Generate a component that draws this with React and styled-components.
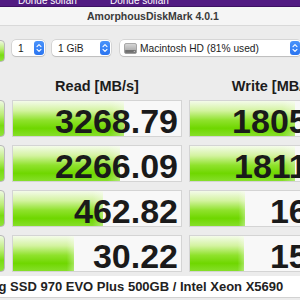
import React from 'react';
import styled, { createGlobalStyle } from 'styled-components';

const GlobalStyle = createGlobalStyle`
  body{
    margin:0;
    font-family:"Liberation Sans", Arial, sans-serif;
  }
`;

const results = [
  { read: 3268.79, write: 1805.55 },
  { read: 2266.09, write: 1811.40 },
  { read: 462.82, write: 16.43 },
  { read: 30.22, write: 15.87 },
];

// bars use a log scale like the app does
const barWidth = (v) => Math.round(24.6 * (1 + Math.log10(v)));

function Stepper() {
  return (
    <StepperBox>
      <svg width="6" height="10" viewBox="0 0 6 10">
        <path d="M1 3.6 L3 1.6 L5 3.6 M1 6.4 L3 8.4 L5 6.4" fill="none" stroke="#fff" strokeWidth="1.1" strokeLinecap="round" strokeLinejoin="round" />
      </svg>
    </StepperBox>
  );
}

function DiskIcon() {
  return (
    <svg width="13" height="13" viewBox="0 0 13 13">
      <defs>
        <linearGradient id="dk" x1="0" y1="0" x2="0" y2="1">
          <stop offset="0" stopColor="#d9d9d9" />
          <stop offset="1" stopColor="#9a9a9a" />
        </linearGradient>
      </defs>
      <rect x="0.5" y="1.5" width="12" height="10" rx="1.5" fill="url(#dk)" stroke="#7d7d7d" strokeWidth="0.6" />
      <rect x="1.2" y="8" width="10.6" height="2.8" fill="#6f6f6f" />
      <circle cx="10.3" cy="9.4" r="0.6" fill="#c8c8c8" />
    </svg>
  );
}

function App() {
  return (
    <Page>
      <GlobalStyle />
      <BackStrip>
        <span>Donde solían</span>
        <span>Donde solían</span>
      </BackStrip>
      <TitleBar>AmorphousDiskMark 4.0.1</TitleBar>
      <Body>
        <Row>
          <SideButton $tall />
          <Toolbar>
            <Select $w={33}>1<Stepper /></Select>
            <Select $w={59}>1 GiB<Stepper /></Select>
            <Select $w={181} $gapLeft={9} $icon><DiskIcon />Macintosh HD (81% used)<Stepper /></Select>
          </Toolbar>
        </Row>
        <HeaderRow>
          <span />
          <ColumnTitle>Read [MB/s]</ColumnTitle>
          <ColumnTitle>Write [MB/s]</ColumnTitle>
        </HeaderRow>
        <Rows>
          {results.map((r, i) => (
            <Row key={i}>
              <SideButton />
              <Cell>
                <Bar style={{ width: barWidth(r.read) }} />
                <Value>{r.read.toFixed(2)}</Value>
              </Cell>
              <Cell>
                <Bar style={{ width: barWidth(r.write) }} />
                <Value>{r.write.toFixed(2)}</Value>
              </Cell>
            </Row>
          ))}
        </Rows>
        <Footer>Samsung SSD 970 EVO Plus 500GB / Intel Xeon X5690</Footer>
      </Body>
    </Page>
  );
}

const Page = styled.div`
  width:300px;
  height:300px;
  overflow:hidden;
  background:#ececec;
`;

const BackStrip = styled.div`
  height:7px;
  background:#521b82;
  border-bottom:1px solid #3d1062;
  box-sizing:border-box;
  display:flex;
  padding-left:18px;
  overflow:hidden;
  span{
    flex:0 0 92px;
    color:#fff;
    font-size:10px;
    line-height:10px;
    margin-top:-4px;
    white-space:nowrap;
  }
`;

const TitleBar = styled.div`
  height:19px;
  box-sizing:border-box;
  background:#f5f5f5;
  border-bottom:1px solid #d9d9d9;
  padding-left:87px;
  font-size:10.5px;
  font-weight:bold;
  line-height:18px;
  color:#3a3a3a;
  white-space:nowrap;
`;

const Body = styled.div`
  width:470px;
  margin-left:-75px;
  padding-top:14px;
`;

const Row = styled.div`
  display:grid;
  grid-template-columns:80px 170px 170px;
  column-gap:7px;
  height:${p => (p.$tall ? 22 : 37)}px;
`;

const HeaderRow = styled(Row)`
  height:23px;
`;

const Rows = styled.div`
  display:flex;
  flex-direction:column;
  gap:8px;
  ${Row}{ height:37px; }
`;

const SideButton = styled.div`
  height:${p => (p.$tall ? 22 : 37)}px;
  box-sizing:border-box;
  border:1px solid #b9b9b9;
  border-radius:4px;
  background:linear-gradient(to bottom,#eef9e0 0%,#b9ec74 40%,#79dc12 70%,#8fe23a 100%);
`;

const Toolbar = styled.div`
  grid-column:2 / span 2;
  display:flex;
  align-items:flex-start;
  gap:7px;
`;

const Select = styled.div`
  position:relative;
  flex:0 0 ${p => p.$w}px;
  margin-left:${p => (p.$gapLeft ? p.$gapLeft - 7 : 0)}px;
  height:16px;
  box-sizing:border-box;
  display:flex;
  align-items:center;
  gap:3px;
  padding-left:${p => (p.$icon ? 4 : 6)}px;
  background:#fff;
  border-radius:4px;
  box-shadow:0 0 0 0.5px rgba(0,0,0,.18), 0 1px 1px rgba(0,0,0,.12);
  font-size:10.2px;
  color:#222;
  white-space:nowrap;
`;

const StepperBox = styled.span`
  position:absolute;
  right:1px;
  top:1px;
  width:10px;
  height:14px;
  border-radius:3px;
  background:linear-gradient(to bottom,#4a93fb,#2a74f0);
  display:flex;
  align-items:center;
  justify-content:center;
`;

const ColumnTitle = styled.div`
  text-align:center;
  font-size:14.5px;
  font-weight:bold;
  line-height:18px;
  color:#1c1c1c;
  white-space:nowrap;
`;

const Cell = styled.div`
  position:relative;
  box-sizing:border-box;
  height:37px;
  border:1px solid #d4d4d4;
  background:#f8f8f8;
  overflow:hidden;
`;

const Bar = styled.div`
  position:absolute;
  left:0;
  top:0;
  bottom:0;
  background:
    linear-gradient(to right, rgba(255,255,255,0) 88%, rgba(255,255,255,.35) 100%),
    linear-gradient(to bottom,#f4fbea 0%,#d3f39f 28%,#8fe22c 55%,#6fd700 78%,#86df2a 100%);
`;

const Value = styled.div`
  position:relative;
  text-align:right;
  padding-right:3px;
  font-size:34px;
  font-weight:bold;
  line-height:40px;
  color:#1a1a1a;
  white-space:nowrap;
`;

const Footer = styled.div`
  margin-top:4px;
  height:22px;
  box-sizing:border-box;
  background:#fff;
  border-bottom:1px solid #d2d2d2;
  padding-left:23px;
  font-size:13px;
  font-weight:bold;
  line-height:22px;
  color:#222;
  white-space:nowrap;
`;

export default App;
